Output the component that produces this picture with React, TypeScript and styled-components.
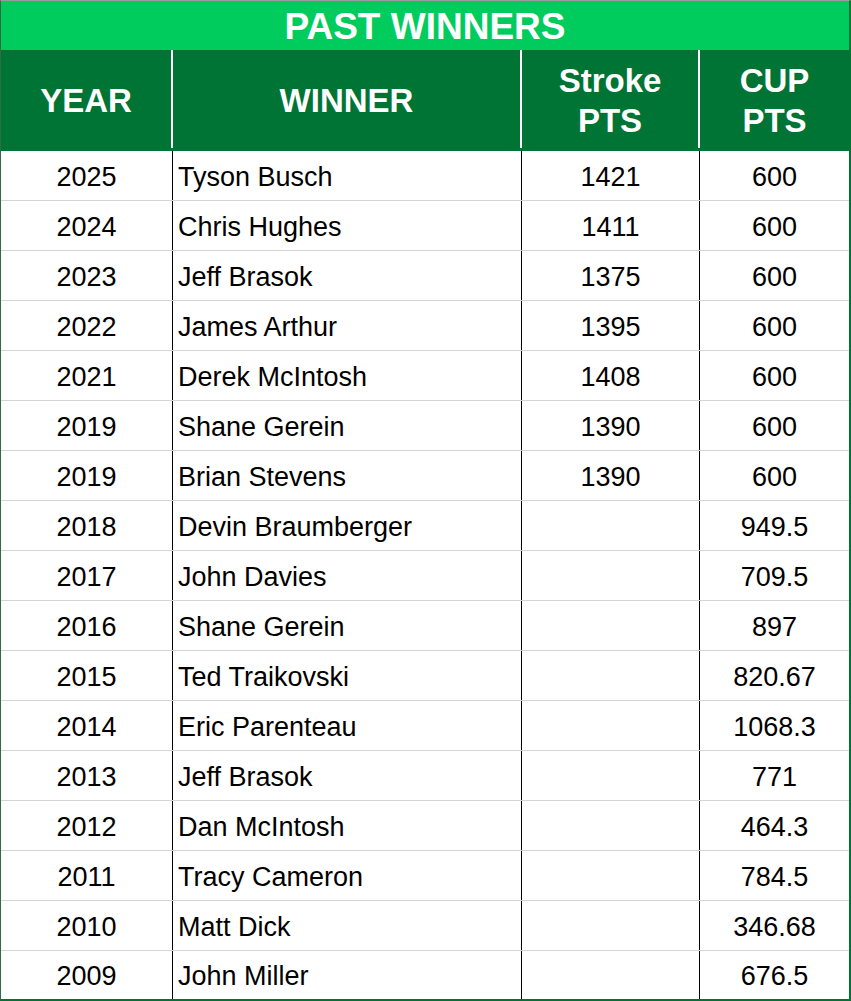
import React from "react";
import styled, { createGlobalStyle } from "styled-components";

const GlobalStyle = createGlobalStyle`
  html, body {
    margin: 0;
    padding: 0;
    background: #ffffff;
    overflow: hidden;
  }
  body {
    font-family: "Liberation Sans", Arial, sans-serif;
  }
`;

const COLS = "172px 349px 178px 149px";

const Sheet = styled.div`
  width: 851px;
  box-sizing: border-box;
  border-top: 1px solid #9a9a9a;
  border-left: 1px solid #2f6b47;
  border-right: 2px solid #007434;
  border-bottom: 2px solid #007434;
  display: flex;
  flex-direction: column;
`;

const TitleBar = styled.div`
  height: 49px;
  box-sizing: border-box;
  padding-top: 2px;
  background: #00cc5e;
  color: #ffffff;
  font-weight: bold;
  font-size: 37px;
  display: flex;
  align-items: center;
  justify-content: center;
`;

const HeaderRow = styled.div`
  display: grid;
  grid-template-columns: ${COLS};
  height: 101px;
  box-sizing: border-box;
  padding-bottom: 3px;
  background: #007434;
`;

const HeaderCell = styled.div<{ $last?: boolean }>`
  box-sizing: border-box;
  border-right: ${(p) => (p.$last ? "none" : "2px solid #ffffff")};
  color: #ffffff;
  font-weight: bold;
  font-size: 33px;
  line-height: 40px;
  padding-top: 4px;
  display: flex;
  align-items: center;
  justify-content: center;
  text-align: center;
`;

const Row = styled.div`
  display: grid;
  grid-template-columns: ${COLS};
  height: 50px;
  box-sizing: border-box;
  border-bottom: 1px solid #d4d4d4;
  &:last-child {
    height: 48px;
    border-bottom: none;
  }
`;

const Cell = styled.div<{ $align?: "left" | "center"; $last?: boolean }>`
  box-sizing: border-box;
  border-right: ${(p) => (p.$last ? "none" : "1px solid #000000")};
  color: #000000;
  font-size: 27px;
  padding-top: 3px;
  display: flex;
  align-items: center;
  justify-content: ${(p) => (p.$align === "left" ? "flex-start" : "center")};
  padding-left: ${(p) => (p.$align === "left" ? "5px" : "0")};
  white-space: nowrap;
`;

type Winner = { year: string; name: string; stroke: string; cup: string };

const winners: Winner[] = [
  { year: "2025", name: "Tyson Busch", stroke: "1421", cup: "600" },
  { year: "2024", name: "Chris Hughes", stroke: "1411", cup: "600" },
  { year: "2023", name: "Jeff Brasok", stroke: "1375", cup: "600" },
  { year: "2022", name: "James Arthur", stroke: "1395", cup: "600" },
  { year: "2021", name: "Derek McIntosh", stroke: "1408", cup: "600" },
  { year: "2019", name: "Shane Gerein", stroke: "1390", cup: "600" },
  { year: "2019", name: "Brian Stevens", stroke: "1390", cup: "600" },
  { year: "2018", name: "Devin Braumberger", stroke: "", cup: "949.5" },
  { year: "2017", name: "John Davies", stroke: "", cup: "709.5" },
  { year: "2016", name: "Shane Gerein", stroke: "", cup: "897" },
  { year: "2015", name: "Ted Traikovski", stroke: "", cup: "820.67" },
  { year: "2014", name: "Eric Parenteau", stroke: "", cup: "1068.3" },
  { year: "2013", name: "Jeff Brasok", stroke: "", cup: "771" },
  { year: "2012", name: "Dan McIntosh", stroke: "", cup: "464.3" },
  { year: "2011", name: "Tracy Cameron", stroke: "", cup: "784.5" },
  { year: "2010", name: "Matt Dick", stroke: "", cup: "346.68" },
  { year: "2009", name: "John Miller", stroke: "", cup: "676.5" },
];

export default function App() {
  return (
    <>
      <GlobalStyle />
      <Sheet>
        <TitleBar>PAST WINNERS</TitleBar>
        <HeaderRow>
          <HeaderCell>YEAR</HeaderCell>
          <HeaderCell>WINNER</HeaderCell>
          <HeaderCell>
            Stroke
            <br />
            PTS
          </HeaderCell>
          <HeaderCell $last>
            CUP
            <br />
            PTS
          </HeaderCell>
        </HeaderRow>
        {winners.map((w, i) => (
          <Row key={i}>
            <Cell>{w.year}</Cell>
            <Cell $align="left">{w.name}</Cell>
            <Cell>{w.stroke}</Cell>
            <Cell $last>{w.cup}</Cell>
          </Row>
        ))}
      </Sheet>
    </>
  );
}
